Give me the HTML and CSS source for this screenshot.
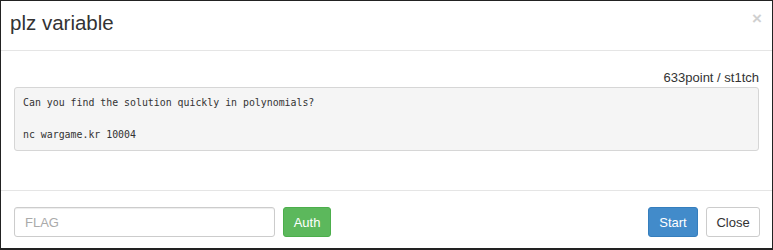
FILE: index.html
```html
<!DOCTYPE html>
<html lang="en">
<head>
    <meta charset="UTF-8">
    <meta name="viewport" content="width=device-width, initial-scale=1.0">
    <title>plz variable</title>
    <link rel="stylesheet" href="styles.css">
</head>
<body>
    <div class="modal">
        <div class="modal-header">
            <h4 class="modal-title">plz variable</h4>
            <button class="close" aria-label="Close">&times;</button>
        </div>

        <div class="modal-body">
            <div class="meta">633point / st1tch</div>
            <pre class="desc">Can you find the solution quickly in polynomials?

nc wargame.kr 10004</pre>
        </div>

        <div class="modal-footer">
            <div class="auth-form">
                <input class="flag-input" type="text" placeholder="FLAG">
                <button class="btn btn-success">Auth</button>
            </div>
            <div class="actions">
                <button class="btn btn-primary">Start</button>
                <button class="btn btn-default">Close</button>
            </div>
        </div>
    </div>
</body>
</html>
```

FILE: styles.css
```css
* {
    box-sizing: border-box;
}

body {
    margin: 0;
    font-family: 'Liberation Sans', Arial, sans-serif;
    font-size: 14px;
    color: #333;
    background: #fff;
}

.modal {
    width: 773px;
    height: 250px;
    border: 1px solid #222;
    border-bottom-width: 2px;
    background: #fff;
    display: flex;
    flex-direction: column;
}

/* Header */
.modal-header {
    height: 50px;
    padding: 10px 9px 0 9px;
    border-bottom: 1px solid #e5e5e5;
    display: flex;
    justify-content: space-between;
    align-items: flex-start;
}

.modal-title {
    margin: 0;
    font-size: 20.5px;
    font-weight: normal;
    line-height: 24px;
    color: #333;
}

.close {
    border: none;
    background: none;
    padding: 0;
    margin-top: -2px;
    margin-right: 1px;
    font-family: 'Liberation Sans', Arial, sans-serif;
    font-size: 17px;
    font-weight: bold;
    line-height: 20px;
    color: #d0d0d0;
    cursor: pointer;
}

/* Body */
.modal-body {
    height: 140px;
    padding: 18px 13px 0 13px;
    border-bottom: 1px solid #e5e5e5;
}

.meta {
    text-align: right;
    font-size: 13px;
    line-height: 18px;
    color: #333;
}

.desc {
    margin: 0;
    padding: 7px 8px;
    font-family: 'DejaVu Sans Mono', 'Liberation Mono', monospace;
    font-size: 9.9px;
    line-height: 16px;
    color: #333;
    background: #f5f5f5;
    border: 1px solid #d6d6d6;
    border-radius: 3px;
}

/* Footer */
.modal-footer {
    flex: 1;
    padding: 16px 12px 0 13px;
    display: flex;
    justify-content: space-between;
    align-items: flex-start;
}

.auth-form,
.actions {
    display: flex;
    gap: 8px;
}

.flag-input {
    width: 261px;
    height: 30px;
    padding: 4px 10px;
    font-family: 'Liberation Sans', Arial, sans-serif;
    font-size: 13px;
    border: 1px solid #ccc;
    border-radius: 3px;
    box-shadow: inset 0 1px 1px rgba(0, 0, 0, 0.075);
}

.flag-input::placeholder {
    color: #aaa;
}

.btn {
    height: 30px;
    padding: 0;
    font-family: 'Liberation Sans', Arial, sans-serif;
    font-size: 13px;
    border: 1px solid transparent;
    border-radius: 3px;
    cursor: pointer;
}

.btn-success {
    width: 48px;
    color: #fff;
    background: #5cb85c;
    border-color: #4cae4c;
}

.btn-primary {
    width: 50px;
    color: #fff;
    background: #428bca;
    border-color: #357ebd;
}

.btn-default {
    width: 54px;
    color: #333;
    background: #fff;
    border-color: #ccc;
}
```
